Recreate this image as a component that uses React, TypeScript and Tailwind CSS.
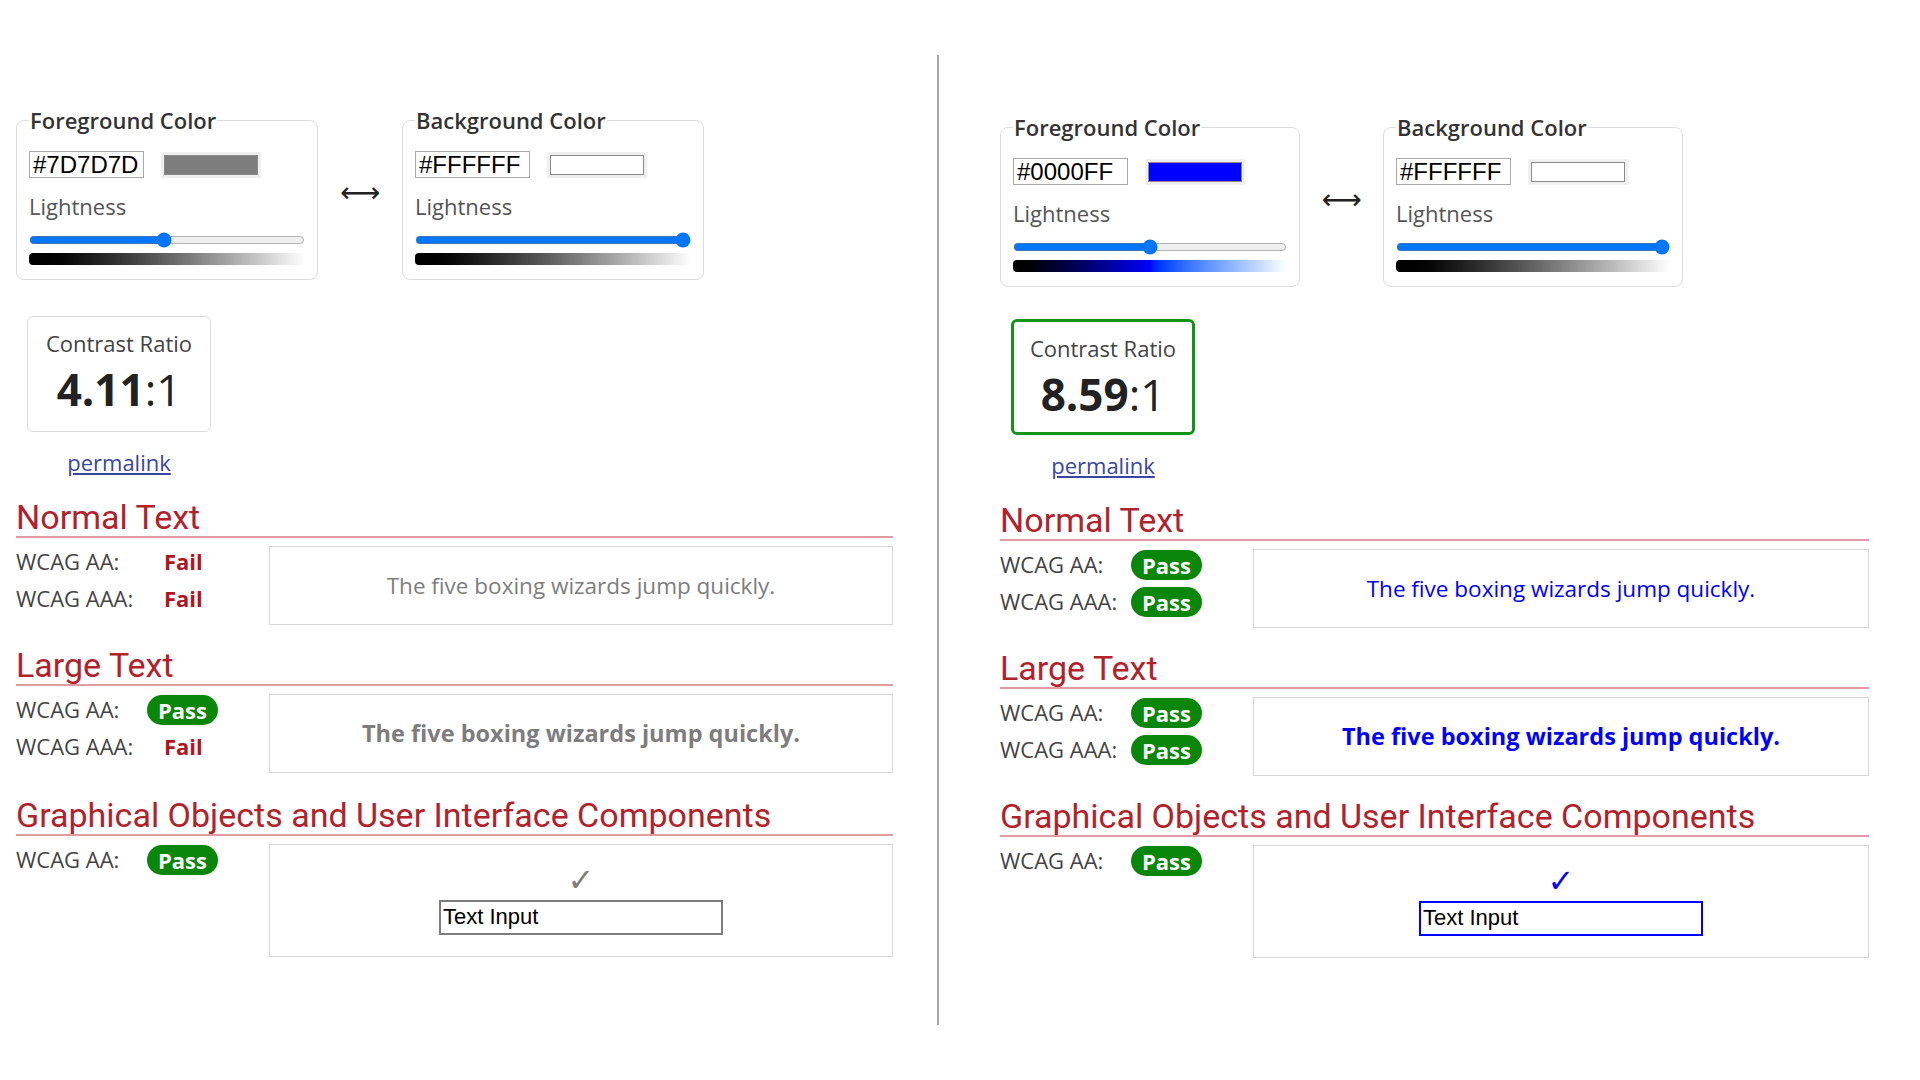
import React from "react";

type Result = "Pass" | "Fail";

type PanelProps = {
	fgHex: string;
	fgColor: string;
	fgGradient: string;
	fgLight: number;
	ratio: string;
	good: boolean;
	normal: [Result, Result];
	large: [Result, Result];
	ui: Result;
	narrow?: boolean;
};

function Badge({ result }: { result: Result }) {
	if (result === "Pass") {
		return (
			<span className="inline-flex h-[30px] w-[71px] items-center justify-center rounded-full bg-[#0a870a] text-[22px] font-bold leading-none text-white">
				Pass
			</span>
		);
	}
	return <span className="pl-[17px] text-[22px] font-bold text-[#b3151d]">Fail</span>;
}

function ColorField({
	title,
	hex,
	color,
	gradient,
	light,
	narrow,
}: {
	title: string;
	hex: string;
	color: string;
	gradient: string;
	light: number;
	narrow?: boolean;
}) {
	return (
		<fieldset className={`${narrow ? "w-[300px]" : "w-[302px]"} rounded-lg border border-[#dcdcdc] px-[12px] pb-[14px]`}>
			<legend className="px-[1px] text-[22px] font-semibold leading-[30px] text-[#333]">{title}</legend>
			<div className="mt-[16px] flex items-center">
				<input
					readOnly
					value={hex}
					className="h-[27px] w-[115px] border border-[#a9a9a9] px-[3px] font-['Liberation_Sans',Arial,sans-serif] text-[24px] leading-none text-black outline-none"
				/>
				<div className="ml-[17px] bg-[#efefef] p-[3px]">
					<div className="h-[20px] w-[94px] border border-[#8a8a8a]" style={{ backgroundColor: color }} />
				</div>
			</div>
			<div className="mt-[14px] text-[22px] leading-[28px] text-[#555]">Lightness</div>
			<input type="range" min={0} max={100} defaultValue={light} className="mt-[12px] block h-[16px] w-full" />
			<div className={`mt-[5px] h-[12px] rounded-l-sm ${gradient}`} />
		</fieldset>
	);
}

function Section({
	title,
	rows,
	height,
	children,
}: {
	title: string;
	rows: [string, Result][];
	height: string;
	children: React.ReactNode;
}) {
	return (
		<section>
			<h2 className="border-b-2 border-[#e29aa3] font-['Roboto',sans-serif] text-[34px] leading-[38px] text-[#b2222b]">
				{title}
			</h2>
			<div className="mt-[8px] flex items-start">
				<div className="-mt-[3px] w-[253px]">
					{rows.map(([label, r]) => (
						<div key={label} className="flex h-[37px] items-center">
							<span className="w-[131px] text-[22px] text-[#444]">{label}</span>
							<Badge result={r} />
						</div>
					))}
				</div>
				<div className={`flex flex-1 flex-col items-center justify-center border border-[#d6d6d6] ${height}`}>
					{children}
				</div>
			</div>
		</section>
	);
}

function Panel(p: PanelProps) {
	return (
		<div>
			<div className="flex items-center">
				<ColorField
					title="Foreground Color"
					hex={p.fgHex}
					color={p.fgColor}
					gradient={p.fgGradient}
					light={p.fgLight}
					narrow={p.narrow}
				/>
				<div
					className={`${p.narrow ? "w-[83px]" : "w-[84px]"} text-center font-['DejaVu_Sans',sans-serif] text-[28px] text-[#222]`}
				>
					⟷
				</div>
				<ColorField
					title="Background Color"
					hex="#FFFFFF"
					color="#ffffff"
					gradient="bg-linear-to-r from-black to-white"
					light={100}
					narrow={p.narrow}
				/>
			</div>

			<div
				className={`ml-[11px] flex h-[116px] w-[184px] flex-col items-center rounded-md pt-[12px] ${
					p.good ? "mt-[32px] border-[3px] border-[#16921a]" : "mt-[36px] border border-[#dcdcdc]"
				}`}
			>
				<div className="text-[22px] leading-[28px] text-[#444]">Contrast Ratio</div>
				<div className="mt-[6px] text-[44px] leading-[52px] text-[#222]">
					<span className="font-bold">{p.ratio}</span>:1
				</div>
			</div>
			<div className="ml-[11px] mt-[15px] w-[184px] text-center text-[22px] leading-[30px]">
				<a href="#" className="text-[#3a46a0] underline">
					permalink
				</a>
			</div>

			<div className="mt-[21px]">
				<Section
					title="Normal Text"
					height="h-[79px]"
					rows={[
						["WCAG AA:", p.normal[0]],
						["WCAG AAA:", p.normal[1]],
					]}
				>
					<span className="text-[22.5px]" style={{ color: p.fgColor }}>
						The five boxing wizards jump quickly.
					</span>
				</Section>
			</div>
			<div className="mt-[21px]">
				<Section
					title="Large Text"
					height="h-[79px]"
					rows={[
						["WCAG AA:", p.large[0]],
						["WCAG AAA:", p.large[1]],
					]}
				>
					<span className="text-[23.5px] font-bold" style={{ color: p.fgColor }}>
						The five boxing wizards jump quickly.
					</span>
				</Section>
			</div>
			<div className={p.narrow ? "mt-[21px]" : "mt-[23px]"}>
				<Section title="Graphical Objects and User Interface Components" height="h-[113px]" rows={[["WCAG AA:", p.ui]]}>
					<span className="font-['DejaVu_Sans',sans-serif] text-[32px] leading-[26px]" style={{ color: p.fgColor }}>
						✓
					</span>
					<input
						readOnly
						value="Text Input"
						className="mt-[7px] h-[35px] w-[284px] border-2 px-[2px] font-['Liberation_Sans',Arial,sans-serif] text-[22px] text-black outline-none"
						style={{ borderColor: p.fgColor }}
					/>
				</Section>
			</div>
		</div>
	);
}

export default function App() {
	return (
		<main className="flex min-h-screen w-full bg-white font-['Open_Sans',sans-serif]">
			<div className="w-[937px] pl-4 pr-[44px] pt-[105px]">
				<Panel
					fgHex="#7D7D7D"
					fgColor="#7d7d7d"
					fgGradient="bg-linear-to-r from-black to-white"
					fgLight={49}
					ratio="4.11"
					good={false}
					normal={["Fail", "Fail"]}
					large={["Pass", "Fail"]}
					ui="Pass"
				/>
			</div>
			<div className="mt-[55px] h-[970px] w-[2px] bg-[#a8a8a8]" />
			<div className="w-[930px] pl-[61px] pt-[112px]">
				<Panel
					fgHex="#0000FF"
					fgColor="#0000ff"
					fgGradient="bg-linear-to-r from-black via-[#0000ff] to-white"
					fgLight={50}
					ratio="8.59"
					good
					normal={["Pass", "Pass"]}
					large={["Pass", "Pass"]}
					ui="Pass"
					narrow
				/>
			</div>
		</main>
	);
}
